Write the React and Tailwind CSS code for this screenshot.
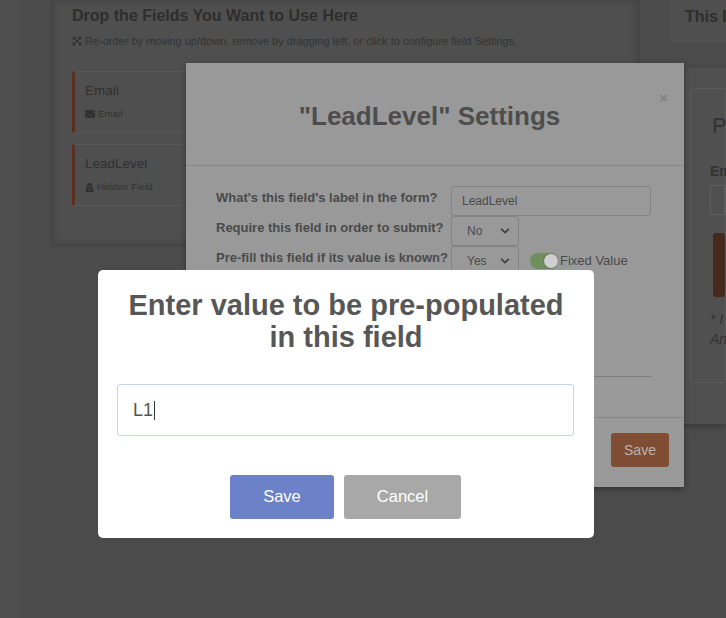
import React from 'react';
import { FaEnvelope, FaExpandArrowsAlt, FaUserSecret, FaChevronDown } from 'react-icons/fa';

function FieldCard({ label, type, icon }) {
    return (
        <div className="h-[62px] border border-[#585858] border-l-[3px] border-l-[#5a3020] pl-[10px] pt-[10px] rounded-[2px]">
            <div className="text-[13.5px] leading-[18px] text-[#303030]">{label}</div>
            <div className="mt-[7px] flex items-center gap-[3px] text-[9.5px] leading-[14px] text-[#303030] tracking-[0.2px]">
                {icon}
                {type}
            </div>
        </div>
    );
}

function FakeSelect({ value }) {
    return (
        <div className="w-[68px] h-[30px] border border-[#838383] rounded-[3px] flex items-center justify-between pl-[15px] pr-[8px] text-[12px] text-[#4a4a4a]">
            {value}
            <FaChevronDown className="text-[10px] text-[#3d3d3d]" />
        </div>
    );
}

function SettingsRow({ label, children }) {
    return (
        <div className="flex items-start h-[30px]">
            <div className="w-[235px] text-[13px] leading-[15px] font-bold text-[#4a4a4a] pt-[4px]">{label}</div>
            {children}
        </div>
    );
}

function App() {
    return (
        <div className="relative h-screen w-full overflow-hidden bg-[#4b4b4b] font-['Liberation_Sans',Arial,sans-serif]">
            {/* page behind the modals */}
            <div className="flex h-full">
                <div className="w-[22px] shrink-0 bg-[#4e4e4e]"></div>
                <div className="w-[30px] shrink-0"></div>
                <div className="w-[586px] h-[245px] shrink-0 bg-[#4f4f4f] shadow-[inset_0_0_10px_rgba(0,0,0,0.2),0_0_3px_rgba(0,0,0,0.25)] rounded-b-[2px] pl-[20px] pr-[20px] pt-[6px]">
                    <h2 className="text-[16px] leading-[20px] font-bold text-[#2e2e2e]">Drop the Fields You Want to Use Here</h2>
                    <div className="mt-[7px] flex items-center gap-[3px] text-[11px] leading-[16px] text-[#333333]">
                        <FaExpandArrowsAlt className="text-[10px]" />
                        Re-order by moving up/down, remove by dragging left, or click to configure field Settings.
                    </div>
                    <div className="mt-[22px] flex flex-col gap-[11px]">
                        <FieldCard label="Email" type="Email" icon={<FaEnvelope className="text-[10px]" />} />
                        <FieldCard label="LeadLevel" type="Hidden Field" icon={<FaUserSecret className="text-[9px]" />} />
                    </div>
                </div>
                <div className="flex-1 min-w-0">
                    <div className="h-[68px] pl-[31px]">
                        <div className="h-[43px] bg-[#4f4f4f] pl-[16px] pt-[7px] text-[16px] leading-[20px] font-bold text-[#2e2e2e] whitespace-nowrap">This I</div>
                    </div>
                    <div className="h-[356px] bg-[#505050] shadow-[0_2px_6px_rgba(0,0,0,0.25)] pt-[20px] pl-[52px]">
                        <div className="h-[295px] border border-[#5a5a5a] rounded-[3px] pl-[19px] pt-[25px]">
                            <div className="ml-[2px] text-[22px] leading-[24px] text-[#333333]">P</div>
                            <div className="mt-[24px] text-[14px] leading-[18px] font-bold text-[#333333]">Em</div>
                            <div className="mt-[5px] h-[30px] border border-[#5f5f5f]"></div>
                            <div className="mt-[18px] ml-[3px] h-[64px] bg-[#45291d] rounded-[3px]"></div>
                            <div className="mt-[12px] text-[14px] leading-[20px] italic text-[#333333]">* I<br />An</div>
                        </div>
                    </div>
                </div>
            </div>

            {/* settings modal */}
            <div className="absolute left-[186px] top-[63px] w-[498px] h-[424px] bg-[#999999] shadow-[0_2px_6px_rgba(0,0,0,0.35)] flex flex-col">
                <div className="relative h-[103px] shrink-0 border-b border-[#858585] flex items-center justify-center pt-[5px] pr-[11px]">
                    <h3 className="text-[26px] font-bold text-[#4d4d4d]">"LeadLevel" Settings</h3>
                    <span className="absolute right-[16px] top-[25px] text-[15px] leading-[20px] font-bold text-[#828282]">×</span>
                </div>
                <div className="flex-1 pt-[20px] pl-[30px] pr-[33px]">
                    <SettingsRow label="What's this field's label in the form?">
                        <div className="w-[200px] h-[30px] border border-[#838383] rounded-[3px] flex items-center pl-[10px] text-[12px] text-[#4a4a4a]">LeadLevel</div>
                    </SettingsRow>
                    <SettingsRow label="Require this field in order to submit?">
                        <FakeSelect value="No" />
                    </SettingsRow>
                    <SettingsRow label="Pre-fill this field if its value is known?">
                        <FakeSelect value="Yes" />
                        <div className="ml-[11px] mt-[6px] flex items-center">
                            <div className="w-[28px] h-[16px] rounded-full bg-[#6f8f5e] flex justify-end items-center">
                                <div className="w-[14px] h-[14px] rounded-full bg-[#cfcfcf] shadow-[0_0_2px_rgba(0,0,0,0.4)]"></div>
                            </div>
                            <span className="ml-[2px] mt-[1px] text-[13px] leading-[16px] text-[#4a4a4a]">Fixed Value</span>
                        </div>
                    </SettingsRow>
                    <div className="mt-[10px] mb-0 pt-[90px] border-b border-[#7d7d7d]"></div>
                </div>
                <div className="h-[70px] shrink-0 border-t border-[#858585] flex items-start justify-end pt-[15px] pr-[15px]">
                    <button className="w-[58px] h-[34px] rounded-[3px] bg-[#7f4d33] text-[14px] text-[#b5b5b5]">Save</button>
                </div>
            </div>

            {/* value dialog */}
            <div className="absolute left-[98px] top-[270px] w-[496px] h-[268px] bg-white rounded-[5px] flex flex-col pt-[19px]">
                <h2 className="w-full text-center text-[29px] leading-[32px] font-bold text-[#575757]">
                    Enter value to be pre-populated<br />in this field
                </h2>
                <div className="mt-[31px] ml-[19px] w-[457px] h-[52px] border border-[#c3d4ee] rounded-[3px] flex items-center pl-[15px] text-[18px] text-[#555555]">
                    L1<span className="ml-[1px] inline-block w-[1px] h-[19px] bg-[#333333]"></span>
                </div>
                <div className="mt-[39px] ml-[132px] flex gap-[10px]">
                    <button className="w-[104px] h-[44px] pb-[1px] rounded-[3px] bg-[#6b82c8] text-[16.5px] text-white">Save</button>
                    <button className="w-[117px] h-[44px] pb-[1px] rounded-[3px] bg-[#a8a8a8] text-[16.5px] text-white">Cancel</button>
                </div>
            </div>
        </div>
    );
}

export default App;
